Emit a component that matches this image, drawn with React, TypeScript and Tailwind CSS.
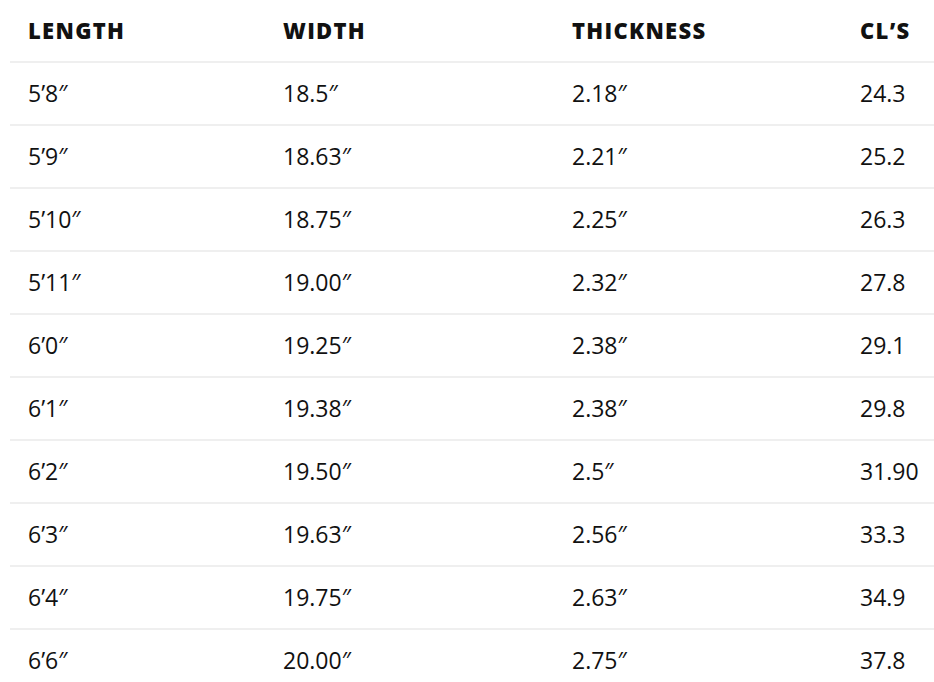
const ROWS = [
  ['5’8″', '18.5″', '2.18″', '24.3'],
  ['5’9″', '18.63″', '2.21″', '25.2'],
  ['5’10″', '18.75″', '2.25″', '26.3'],
  ['5’11″', '19.00″', '2.32″', '27.8'],
  ['6’0″', '19.25″', '2.38″', '29.1'],
  ['6’1″', '19.38″', '2.38″', '29.8'],
  ['6’2″', '19.50″', '2.5″', '31.90'],
  ['6’3″', '19.63″', '2.56″', '33.3'],
  ['6’4″', '19.75″', '2.63″', '34.9'],
  ['6’6″', '20.00″', '2.75″', '37.8'],
];

const HEAD = ['LENGTH', 'WIDTH', 'THICKNESS', 'CL’S'];

const COLS = 'grid grid-cols-[255px_289px_288px_1fr] items-center pl-[18px]';

export default function App() {
  return (
    <div className="h-[682px] w-[934px] overflow-hidden bg-white pl-[10px] font-['Open_Sans',sans-serif] text-[#111]">
      <div className={`${COLS} h-[61px] text-[22px] font-extrabold tracking-[1.3px]`}>
        {HEAD.map((h) => (
          <span key={h}>{h}</span>
        ))}
      </div>
      {ROWS.map((r) => (
        <div key={r[0]} className={`${COLS} h-[63px] border-t-2 border-[#efefef] text-[23px]`}>
          {r.map((c, i) => (
            <span key={i}>{c}</span>
          ))}
        </div>
      ))}
    </div>
  );
}
